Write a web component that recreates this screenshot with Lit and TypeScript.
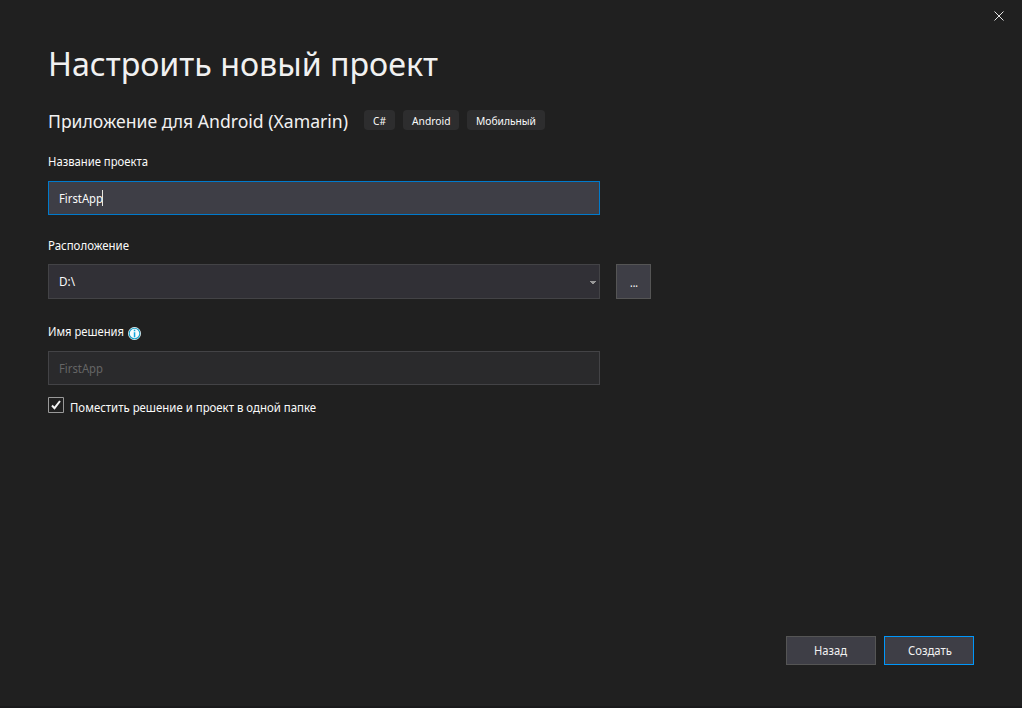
import { LitElement, html, css } from 'lit';
import { customElement, property } from 'lit/decorators.js';

// A single line of text set to a fixed advance width.
@customElement('fit-text')
export class FitText extends LitElement {
  @property() text = '';
  @property({ type: Number }) width = 0;
  @property({ type: Number }) size = 12;
  @property({ type: Number }) height = 16;
  @property({ type: Number }) base = 12;

  static styles = css`
    :host { display: block; flex: none; }
    svg { display: block; overflow: visible; fill: currentColor; }
  `;

  render() {
    return html`<svg width=${this.width} height=${this.height}><text x="0" y=${this.base} font-size=${this.size} textLength=${this.width} lengthAdjust="spacingAndGlyphs">${this.text}</text></svg>`;
  }
}

@customElement('app-root')
export class AppRoot extends LitElement {
  private tags: [string, number][] = [['C#', 13], ['Android', 38.5], ['Мобильный', 60]];

  static styles = css`
    :host { display: block; height: 708px; font: 12px/16px "Noto Sans", "Open Sans", sans-serif; color: #fafafa; background: #202020; }
    * { box-sizing: border-box; }
    .window { height: 708px; display: flex; flex-direction: column; background: #202020; border-bottom: 2px solid #1a1a1b; overflow: hidden; }
    .top { height: 32px; display: flex; justify-content: flex-end; padding: 10px 17px 0 0; }
    .main { flex: 1; padding: 8px 48px 0; }
    h1 { margin: 0; font-weight: 400; height: 48px; color: #f1f1f1; }
    .sub { display: flex; height: 20px; margin-top: 22px; color: #f1f1f1; }
    .tags { display: flex; gap: 8px; margin-left: 16px; color: #fafafa; }
    .tag { height: 20px; padding: 2px 9px 0; border-radius: 4px; background: #2d2d2e; }
    .tag:first-child { width: 31px; }
    .tag:nth-child(2) { width: 56px; }
    .label { display: flex; height: 16px; gap: 4px; }
    .l1 { margin-top: 24px; }
    .l2 { margin-top: 23px; }
    .l3 { margin-top: 25px; }
    .label svg { margin-top: 2px; overflow: visible; }
    .field { width: 552px; height: 34px; border: 1px solid #3f3f46; padding: 0 10px; display: flex; align-items: center; background: #313036; }
    .active { background: #3e3e46; border-color: #007acc; margin-top: 11px; }
    .row { display: flex; gap: 16px; margin-top: 10px; }
    .combo { height: 35px; justify-content: space-between; padding-right: 3px; border-color: #434346; }
    .combo svg { margin-top: 2px; }
    .browse { width: 35px; height: 35px; border: 1px solid #555; background: #3e3e46; display: grid; place-items: center; padding-top: 2px; }
    .off { background: #2a2a2c; border-color: #434346; color: #656565; margin-top: 11px; }
    .caret { width: 1px; height: 16px; margin-left: -1px; background: #e6e6e0; }
    .check { display: flex; gap: 6px; margin-top: 12px; }
    .foot { display: flex; justify-content: flex-end; gap: 8px; padding: 0 48px 41px; }
    .btn { width: 90px; height: 29px; border: 1px solid #555; background: #3e3e46; display: grid; place-items: center; padding-right: 1px; color: #f1f1f1; }
    .primary { border-color: #0097fb; padding: 0 0 0 1px; }
  `;

  private txt(text: string, width: number, base = 12, size = 12, height = 16) {
    return html`<fit-text .text=${text} .width=${width} .size=${size} .base=${base} .height=${height}></fit-text>`;
  }

  render() {
    return html`<div class="window">
      <div class="top"><svg width="12" height="12" stroke="#e4e4e4" stroke-width="1"><path d="M1.5 1.5l9 9M10.5 1.5l-9 9"/></svg></div>
      <div class="main">
        <h1>${this.txt('Настроить новый проект', 390, 36, 33, 48)}</h1>
        <div class="sub">${this.txt('Приложение для Android (Xamarin)', 300, 18, 18, 20)}
          <div class="tags">${this.tags.map(([t, w]) => html`<span class="tag">${this.txt(t, w, 13, 11)}</span>`)}</div></div>
        <div class="label l1">${this.txt('Название проекта', 100)}</div>
        <div class="field active">${this.txt('FirstApp', 44, 13)}<span class="caret"></span></div>
        <div class="label l2">${this.txt('Расположение', 81)}</div>
        <div class="row">
          <div class="field combo">${this.txt('D:\\', 16, 12)}<svg width="6" height="3" fill="#999"><path d="M0 0h6v1H5v1H4v1H2V2H1V1H0z"/></svg></div>
          <div class="browse">${this.txt('...', 8, 12)}</div>
        </div>
        <div class="label l3">${this.txt('Имя решения', 76)}
          <svg width="14" height="14"><circle cx="6.5" cy="7.5" r="6.5" fill="#f5fbfd"/><circle cx="6.5" cy="7.5" r="5.3" fill="#f5fbfd" stroke="#1ba1c8" stroke-width="1.1"/><path d="M5.8 3.8h1.5v1.5H5.8zM5.8 6.3h1.5v5H5.8z" fill="#10a5dc"/></svg></div>
        <div class="field off">${this.txt('FirstApp', 44, 13)}</div>
        <div class="check"><svg width="16" height="16" fill="none"><path d="M.5.5h15v15H.5z" stroke="#999"/><path d="M4 8.5l2.5 2.6L12 4" stroke="#f5f5f5" stroke-width="2"/></svg>${this.txt('Поместить решение и проект в одной папке', 246, 15)}</div>
      </div>
      <div class="foot"><div class="btn">${this.txt('Назад', 33)}</div><div class="btn primary">${this.txt('Создать', 44)}</div></div>
    </div>`;
  }
}
